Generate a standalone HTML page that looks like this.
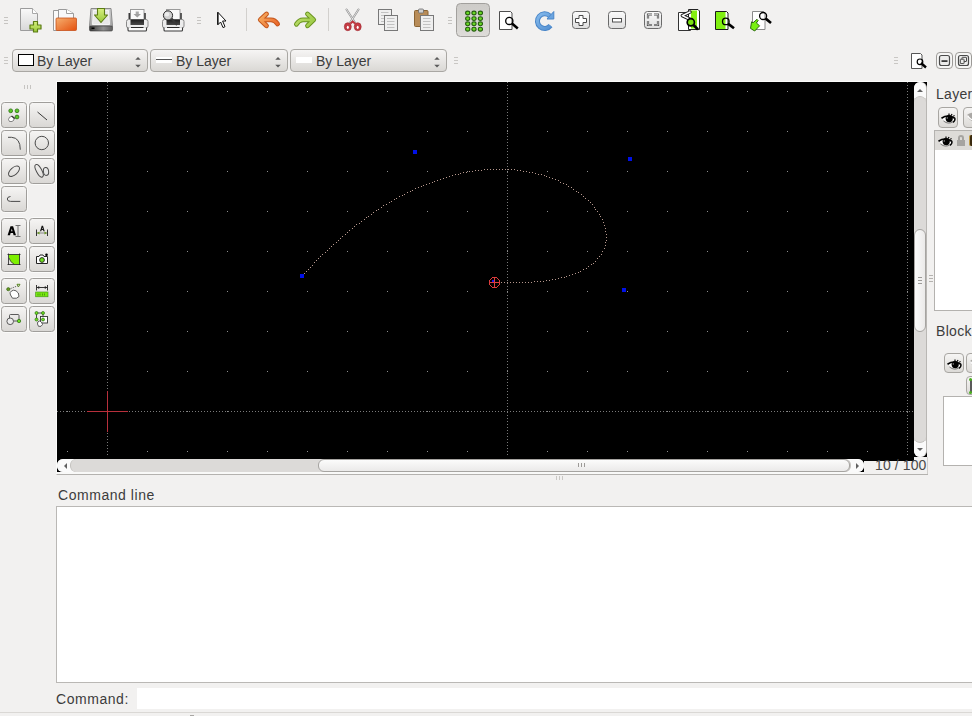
<!DOCTYPE html>
<html><head><meta charset="utf-8">
<style>
*{margin:0;padding:0;box-sizing:border-box}
html,body{width:972px;height:716px;overflow:hidden;background:#f2f1f0;font-family:"Liberation Sans",sans-serif;font-size:14px;color:#3c3c3c}
.a{position:absolute}
.hgrip{position:absolute;width:4px;height:7px;background:repeating-linear-gradient(to bottom,#c9c7c4 0,#c9c7c4 1px,transparent 1px,transparent 3px)}
.vgrip{position:absolute;width:7px;height:4px;background:repeating-linear-gradient(to right,#c9c7c4 0,#c9c7c4 1px,transparent 1px,transparent 3px)}
.combo{position:absolute;top:49px;height:23px;border:1px solid #a9a7a3;border-radius:4px;background:linear-gradient(#f6f5f4,#dad8d5)}
.combo .t{position:absolute;top:3px;font-size:14px;color:#3c3c3c}
.combo .ar{position:absolute;top:6px;width:6px;height:12px}
.tb{position:absolute;width:26px;height:26px;border:1px solid #a8a6a2;border-radius:4px;background:linear-gradient(#f6f5f4,#dcdad7)}
.tb svg{position:absolute;left:0;top:0}
svg{overflow:visible}
</style></head><body>

<!-- toolbar row 1 -->
<svg class="a" style="left:0;top:0" width="972" height="42" viewBox="0 0 972 42"><defs>
<linearGradient id="pg" x1="0" y1="0" x2="0" y2="1"><stop offset="0" stop-color="#fafafa"/><stop offset="1" stop-color="#d8d8d8"/></linearGradient>
<linearGradient id="og" x1="0" y1="0" x2="1" y2="1"><stop offset="0" stop-color="#f6b070"/><stop offset="1" stop-color="#e4500e"/></linearGradient>
<linearGradient id="gg" x1="0" y1="0" x2="0" y2="1"><stop offset="0" stop-color="#d8f080"/><stop offset="1" stop-color="#98c838"/></linearGradient>
<linearGradient id="drv" x1="0" y1="0" x2="0" y2="1"><stop offset="0" stop-color="#d4d4d4"/><stop offset="1" stop-color="#a8a8a8"/></linearGradient>
<linearGradient id="drvb" x1="0" y1="0" x2="1" y2="0"><stop offset="0" stop-color="#3a3a3a"/><stop offset="0.6" stop-color="#909090"/><stop offset="1" stop-color="#606060"/></linearGradient>
<linearGradient id="slot" x1="0" y1="0" x2="0" y2="1"><stop offset="0" stop-color="#202020"/><stop offset="1" stop-color="#4a4a4a"/></linearGradient>
<linearGradient id="ug" gradientUnits="userSpaceOnUse" x1="258" y1="12" x2="280" y2="28"><stop offset="0" stop-color="#f8b868"/><stop offset="1" stop-color="#e85a20"/></linearGradient>
<linearGradient id="rg" gradientUnits="userSpaceOnUse" x1="294" y1="12" x2="316" y2="28"><stop offset="0" stop-color="#c0e070"/><stop offset="1" stop-color="#98c840"/></linearGradient>
<linearGradient id="btn" x1="0" y1="0" x2="0" y2="1"><stop offset="0" stop-color="#fbfbfb"/><stop offset="1" stop-color="#dedede"/></linearGradient>
<linearGradient id="prs" x1="0" y1="0" x2="0" y2="1"><stop offset="0" stop-color="#cdcbc8"/><stop offset="1" stop-color="#dedcd9"/></linearGradient>
<linearGradient id="blu" gradientUnits="userSpaceOnUse" x1="535" y1="11" x2="555" y2="31"><stop offset="0" stop-color="#8cc0f0"/><stop offset="1" stop-color="#4a88cc"/></linearGradient>
</defs><path d="M4 17.5h4M4 20.5h4M4 23.5h4" stroke="#c6c4c1" stroke-width="1"/><path d="M20.5 8.5H32.5L37.5 13.5V30.5H20.5Z" fill="url(#pg)" stroke="#9c9c9c"/><path d="M32.5 8.5V13.5H37.5" fill="#fff" stroke="#a8a8a8"/><path d="M33.5 21.5h4v3.5h3.5v4h-3.5v3h-4v-3H30v-4h3.5Z" fill="url(#gg)" stroke="#5c7c14" stroke-width="1.2" stroke-linejoin="round"/><path d="M53.5 10.5H60V30.5H53.5Z" fill="#fafafa" stroke="#9a9a9a"/><path d="M58.5 9.5H66.5L73.5 13.5V22H58.5Z" fill="#f8f8fa" stroke="#9a9a9a"/><path d="M66.5 9.5V13.5H73.5" fill="#fff" stroke="#a0a0a0"/><rect x="56" y="18" width="20.5" height="12.5" rx="1" fill="url(#og)" stroke="#c8501a" stroke-width="0.8"/><path d="M91 8.5H111L112.5 26.5H89.5Z" fill="url(#drv)" stroke="#8a8a8a"/><path d="M93.5 10.5H108.5L109.5 24.5H92.5Z" fill="#e8e8e8" stroke="#f8f8f8" stroke-width="0.9"/><rect x="89.5" y="26" width="23" height="5" rx="1.2" fill="url(#drvb)" stroke="#3a3a3a" stroke-width="0.6"/><rect x="91.5" y="27.5" width="3" height="1.5" fill="#000"/><path d="M97.5 8.5H104.5V15H107.5L101 22.5L94.5 15H97.5Z" fill="url(#gg)" stroke="#5c7c14" stroke-width="1.1" stroke-linejoin="round"/><rect x="130.5" y="9.5" width="13.5" height="10" fill="#fafafa" stroke="#9a9a9a"/><rect x="128.5" y="13" width="1.6" height="6" fill="#3a3a3a"/><rect x="144.2" y="13" width="1.6" height="6" fill="#3a3a3a"/><rect x="126.5" y="19.5" width="21.5" height="8.5" rx="2" fill="#ececec" stroke="#8a8a8a"/><rect x="130.5" y="19.5" width="13.5" height="5.5" fill="url(#slot)"/><path d="M128 27.5v2.5q0 1 1 1h16.5q1 0 1-1v-2.5" fill="#fbfbfb" stroke="#3a3a3a" stroke-width="1.1"/><path d="M131 27.5H143.5" stroke="#2a2a2a" stroke-width="1"/><path d="M133.5 14h7.5l-3.75 3.6z" fill="#a0a0a0"/><rect x="135.7" y="11.5" width="3.1" height="2.6" fill="#a8a8a8"/><rect x="166.5" y="9.5" width="13.5" height="10" fill="#fafafa" stroke="#9a9a9a"/><rect x="164.5" y="13" width="1.6" height="6" fill="#3a3a3a"/><rect x="180.2" y="13" width="1.6" height="6" fill="#3a3a3a"/><rect x="162.5" y="19.5" width="21.5" height="8.5" rx="2" fill="#ececec" stroke="#8a8a8a"/><rect x="166.5" y="19.5" width="13.5" height="5.5" fill="url(#slot)"/><path d="M164 27.5v2.5q0 1 1 1h16.5q1 0 1-1v-2.5" fill="#fbfbfb" stroke="#3a3a3a" stroke-width="1.1"/><path d="M167 27.5H179.5" stroke="#2a2a2a" stroke-width="1"/><path d="M171.5 18.5l5.5 6.5" stroke="#3a3a3a" stroke-width="2"/><circle cx="168" cy="15.4" r="4.6" fill="#d0d0d0" stroke="#2a2a2a" stroke-width="1"/><circle cx="167" cy="14.2" r="2.2" fill="#ececec"/><path d="M197 17.5h4M197 20.5h4M197 23.5h4" stroke="#c6c4c1" stroke-width="1"/><path d="M217.8 12.2V24.8L220.6 22L223 27.6L225 26.7L222.6 21H226Z" fill="#fff" stroke="#111" stroke-width="1" stroke-linejoin="round"/><path d="M217.8 12.5V24.5" stroke="#111" stroke-width="1.3"/><path d="M246.5 8V31M328.5 8V31" stroke="#d2d0cd" stroke-width="1"/><g fill="none" stroke-linecap="round" stroke-linejoin="round"><path d="M266.5 14L260.3 19.8L266.5 25.8M261.5 19.8H271Q275 19.8 277.6 24" stroke="#c4561c" stroke-width="4.8"/><path d="M266.5 14L260.3 19.8L266.5 25.8M261.5 19.8H271Q275 19.8 277.6 24" stroke="url(#ug)" stroke-width="2.8"/></g><g fill="none" stroke-linecap="round" stroke-linejoin="round"><path d="M307.5 14L313.7 19.8L307.5 25.8M312.5 19.8H303Q299 19.8 296.4 24.3" stroke="#6a9420" stroke-width="4.8"/><path d="M307.5 14L313.7 19.8L307.5 25.8M312.5 19.8H303Q299 19.8 296.4 24.3" stroke="url(#rg)" stroke-width="2.8"/></g><path d="M346.5 9.5L355.5 23.5M358.5 9.5L349.5 23.5" stroke="#8c8c8c" stroke-width="2" stroke-linecap="round"/><path d="M346.5 9.5L355.5 23.5M358.5 9.5L349.5 23.5" stroke="#f4f4f4" stroke-width="0.8" stroke-linecap="round"/><ellipse cx="347.8" cy="26.7" rx="3.5" ry="4" fill="#c43c44" stroke="#a02830" stroke-width="0.6"/><ellipse cx="357.7" cy="26.7" rx="3.5" ry="4" fill="#c43c44" stroke="#a02830" stroke-width="0.6"/><ellipse cx="347.8" cy="27.3" rx="1" ry="1.6" fill="#fff"/><ellipse cx="357.7" cy="27.3" rx="1" ry="1.6" fill="#fff"/><path d="M350.5 23.5L352.7 21.5L355 23.5" stroke="#c03840" stroke-width="2" fill="none"/><rect x="378.5" y="9.5" width="13" height="15" fill="#efefef" stroke="#787878"/><path d="M381 12.5H388.5" stroke="#c2c2c2" stroke-width="1"/><path d="M381 15.5H388.5" stroke="#c2c2c2" stroke-width="1"/><path d="M381 18.5H388.5" stroke="#c2c2c2" stroke-width="1"/><path d="M381 21.5H388.5" stroke="#c2c2c2" stroke-width="1"/><rect x="384.5" y="15.5" width="13" height="15" fill="#efefef" stroke="#787878"/><path d="M387 18.5H394.5" stroke="#c2c2c2" stroke-width="1"/><path d="M387 21.5H394.5" stroke="#c2c2c2" stroke-width="1"/><path d="M387 24.5H394.5" stroke="#c2c2c2" stroke-width="1"/><path d="M387 27.5H394.5" stroke="#c2c2c2" stroke-width="1"/><rect x="414.5" y="10.5" width="13.5" height="16" rx="1" fill="#b88c58" stroke="#8a6434"/><rect x="418.5" y="9" width="5" height="4" rx="1" fill="#d0d0d0" stroke="#6a6a6a" stroke-width="0.8"/><rect x="420.5" y="15.5" width="13" height="15" fill="#efefef" stroke="#787878"/><path d="M423 18.5H430.5" stroke="#c2c2c2" stroke-width="1"/><path d="M423 21.5H430.5" stroke="#c2c2c2" stroke-width="1"/><path d="M423 24.5H430.5" stroke="#c2c2c2" stroke-width="1"/><path d="M423 27.5H430.5" stroke="#c2c2c2" stroke-width="1"/><path d="M448 17.5h4M448 20.5h4M448 23.5h4" stroke="#c6c4c1" stroke-width="1"/><rect x="456.5" y="3.5" width="33" height="33" rx="4" fill="url(#prs)" stroke="#a2a09d"/><ellipse cx="467.7" cy="13" rx="2.1" ry="1.9" fill="#6ad824" stroke="#245e0e" stroke-width="1.1"/><ellipse cx="467.7" cy="18.6" rx="2.1" ry="1.9" fill="#6ad824" stroke="#245e0e" stroke-width="1.1"/><ellipse cx="467.7" cy="23.8" rx="2.1" ry="1.9" fill="#6ad824" stroke="#245e0e" stroke-width="1.1"/><ellipse cx="467.7" cy="29.2" rx="2.1" ry="1.9" fill="#6ad824" stroke="#245e0e" stroke-width="1.1"/><ellipse cx="474" cy="13" rx="2.1" ry="1.9" fill="#6ad824" stroke="#245e0e" stroke-width="1.1"/><ellipse cx="474" cy="18.6" rx="2.1" ry="1.9" fill="#6ad824" stroke="#245e0e" stroke-width="1.1"/><ellipse cx="474" cy="23.8" rx="2.1" ry="1.9" fill="#6ad824" stroke="#245e0e" stroke-width="1.1"/><ellipse cx="474" cy="29.2" rx="2.1" ry="1.9" fill="#6ad824" stroke="#245e0e" stroke-width="1.1"/><ellipse cx="480.4" cy="13" rx="2.1" ry="1.9" fill="#6ad824" stroke="#245e0e" stroke-width="1.1"/><ellipse cx="480.4" cy="18.6" rx="2.1" ry="1.9" fill="#6ad824" stroke="#245e0e" stroke-width="1.1"/><ellipse cx="480.4" cy="23.8" rx="2.1" ry="1.9" fill="#6ad824" stroke="#245e0e" stroke-width="1.1"/><ellipse cx="480.4" cy="29.2" rx="2.1" ry="1.9" fill="#6ad824" stroke="#245e0e" stroke-width="1.1"/><path d="M499.5 11.5H510.5L512 13V29.5H499.5Z" fill="#fff" stroke="#3a3a3a" stroke-width="0.9"/><path d="M512.0 23.599999999999998L517.8 28.4" stroke="#000" stroke-width="2.6"/><circle cx="509.3" cy="20.9" r="3.6" fill="none" stroke="#000" stroke-width="1.3"/><path d="M549.7 15.8A7.3 7.3 0 1 0 550.5 25.6" fill="none" stroke="#4a86c8" stroke-width="5"/><path d="M549.7 15.8A7.3 7.3 0 1 0 550.5 25.6" fill="none" stroke="url(#blu)" stroke-width="3"/><path d="M553.8 11.5V19H547Z" fill="#6aa4e0" stroke="#4a86c8" stroke-width="1" stroke-linejoin="round"/><rect x="572.5" y="11.5" width="17" height="17" rx="3" fill="url(#btn)" stroke="#6a6a6a"/><path d="M579 15.5h4v3h3.5v4h-3.5v3h-4v-3h-3.5v-4h3.5z" fill="#fff" stroke="#4a4a4a" stroke-width="1"/><rect x="608.5" y="11.5" width="17" height="17" rx="3" fill="url(#btn)" stroke="#6a6a6a"/><rect x="612.5" y="18.5" width="9" height="3.5" fill="#fff" stroke="#505050"/><rect x="644.5" y="11.5" width="17" height="17" rx="3" fill="url(#btn)" stroke="#6a6a6a"/><path d="M648 18.5V14.5H652M654 14.5H658V18.5M658 21V25H654M652 25H648V21" fill="none" stroke="#505050" stroke-width="2.2"/><path d="M648 18.5V14.5H652M654 14.5H658V18.5M658 21V25H654M652 25H648V21" fill="none" stroke="#fff" stroke-width="0.6"/><path d="M678.5 12.5H684L690.5 12.5V30.5H678.5Z" fill="#fff" stroke="#333" stroke-width="1"/><path d="M688.5 9.5H698L699.5 11V29.5H688.5Z" fill="#fff" stroke="#222" stroke-width="1"/><rect x="691" y="10.5" width="6" height="18" fill="#84ee10"/><path d="M690 12L682.3 15.6L690 19.3" fill="none" stroke="#1a1a1a" stroke-width="3.4" stroke-linejoin="round" stroke-linecap="round"/><path d="M690 12L682.3 15.6L690 19.3" fill="none" stroke="#fff" stroke-width="1.6" stroke-linejoin="round" stroke-linecap="round"/><path d="M693.5 25.0L698 29.5" stroke="#000" stroke-width="2.6"/><circle cx="690.8" cy="22.3" r="3.6" fill="#78e010" stroke="#000" stroke-width="1.7"/><path d="M715.5 11.5H726.5L728 13V29.5H715.5Z" fill="#fff" stroke="#1a1a1a" stroke-width="1"/><rect x="716" y="12" width="9.5" height="17" fill="#80f010"/><path d="M728.275 23.875L734 28.2" stroke="#000" stroke-width="2.6"/><circle cx="725.8" cy="21.4" r="3.3" fill="none" stroke="#000" stroke-width="1.3"/><path d="M752.5 11.5H763.5L765 13V29.5H752.5Z" fill="#fff" stroke="#8a8a8a" stroke-width="1"/><path d="M765.725 18.625L771 23" stroke="#000" stroke-width="2.6"/><circle cx="763.1" cy="16" r="3.5" fill="none" stroke="#000" stroke-width="1.3"/><path d="M750.5 28.4L751.6 21.8L753 22.8L757 19.3L758.2 20.5L756.4 23L759.6 25.8L754.7 31Z" fill="#78f010" stroke="#1e5a08" stroke-width="0.9" stroke-linejoin="round"/></svg>

<!-- toolbar row 2 -->
<div class="hgrip" style="left:4px;top:57px"></div>
<div class="combo" style="left:12px;width:136px"><svg class="ar" style="left:122px;top:6px" width="7" height="13" viewBox="0 0 7 13"><path d="M0.3 3.9L3.5 0.7L6.7 3.9Z" fill="#5a5a5a"/><path d="M0.3 9.8L3.5 13L6.7 9.8Z" fill="#5a5a5a"/></svg>
  <div class="a" style="left:5px;top:4px;width:16px;height:12px;border:1.2px solid #000;background:#fff"></div>
  <div class="t" style="left:24px">By Layer</div>
</div>
<div class="combo" style="left:150px;width:138px"><svg class="ar" style="left:124px;top:6px" width="7" height="13" viewBox="0 0 7 13"><path d="M0.3 3.9L3.5 0.7L6.7 3.9Z" fill="#5a5a5a"/><path d="M0.3 9.8L3.5 13L6.7 9.8Z" fill="#5a5a5a"/></svg>
  <div class="a" style="left:5px;top:7px;width:16px;height:6px;background:#fff"><div class="a" style="left:0;top:2px;width:16px;height:1px;background:#555"></div></div>
  <div class="t" style="left:25px">By Layer</div>
</div>
<div class="combo" style="left:290px;width:157px"><svg class="ar" style="left:143px;top:6px" width="7" height="13" viewBox="0 0 7 13"><path d="M0.3 3.9L3.5 0.7L6.7 3.9Z" fill="#5a5a5a"/><path d="M0.3 9.8L3.5 13L6.7 9.8Z" fill="#5a5a5a"/></svg>
  <div class="a" style="left:5px;top:7px;width:16px;height:6px;background:#fff"></div>
  <div class="t" style="left:25px">By Layer</div>
</div>
<div class="hgrip" style="left:454px;top:57px"></div>
<div class="hgrip" style="left:894px;top:57px"></div>

<svg class="a" style="left:900px;top:42px" width="72" height="38" viewBox="900 42 72 38">
<path d="M911.5 53.5H920.5L922 55V68.5H911.5Z" fill="#fff" stroke="#555" stroke-width="1"/>
<path d="M921 63L926 67.5" stroke="#000" stroke-width="2.4"/><circle cx="920" cy="61.8" r="2.8" fill="none" stroke="#000" stroke-width="1.2"/>
<rect x="936.5" y="52.5" width="16" height="16" rx="3.5" fill="#f6f6f5" stroke="#9c9a97"/>
<rect x="939.5" y="55.5" width="10" height="10" rx="2" fill="#ececeb" stroke="#4a4a4a" stroke-width="1.2"/>
<rect x="941.5" y="60.2" width="6" height="1.8" fill="#3a3a3a"/>
<rect x="955.5" y="52.5" width="16" height="16" rx="3.5" fill="#f6f6f5" stroke="#9c9a97"/>
<rect x="958.5" y="55.5" width="10" height="10" rx="2" fill="#ececeb" stroke="#4a4a4a" stroke-width="1.2"/>
<rect x="962" y="57.3" width="4.5" height="4.2" rx="0.5" fill="none" stroke="#4a4a4a" stroke-width="1"/>
<rect x="960.3" y="59.2" width="3.8" height="4.4" rx="0.5" fill="#ececeb" stroke="#4a4a4a" stroke-width="1"/>
</svg>

<!-- left tool panel -->
<svg class="a" style="left:0;top:0" width="60" height="340" viewBox="0 0 60 340"><defs><linearGradient id="tbg" x1="0" y1="0" x2="0" y2="1"><stop offset="0" stop-color="#f6f5f4"/><stop offset="1" stop-color="#d9d7d4"/></linearGradient></defs><path d="M24.5 85V89M27.5 85V89M30.5 85V89" stroke="#c6c4c1"/><rect x="0.5" y="101.5" width="27" height="27" rx="4" fill="none" stroke="#fbfbfa"/><rect x="1.5" y="102.5" width="25" height="25" rx="3" fill="url(#tbg)" stroke="#a09e9b"/><rect x="28.5" y="101.5" width="27" height="27" rx="4" fill="none" stroke="#fbfbfa"/><rect x="29.5" y="102.5" width="25" height="25" rx="3" fill="url(#tbg)" stroke="#a09e9b"/><rect x="0.5" y="129.5" width="27" height="27" rx="4" fill="none" stroke="#fbfbfa"/><rect x="1.5" y="130.5" width="25" height="25" rx="3" fill="url(#tbg)" stroke="#a09e9b"/><rect x="28.5" y="129.5" width="27" height="27" rx="4" fill="none" stroke="#fbfbfa"/><rect x="29.5" y="130.5" width="25" height="25" rx="3" fill="url(#tbg)" stroke="#a09e9b"/><rect x="0.5" y="157.5" width="27" height="27" rx="4" fill="none" stroke="#fbfbfa"/><rect x="1.5" y="158.5" width="25" height="25" rx="3" fill="url(#tbg)" stroke="#a09e9b"/><rect x="28.5" y="157.5" width="27" height="27" rx="4" fill="none" stroke="#fbfbfa"/><rect x="29.5" y="158.5" width="25" height="25" rx="3" fill="url(#tbg)" stroke="#a09e9b"/><rect x="0.5" y="185.5" width="27" height="27" rx="4" fill="none" stroke="#fbfbfa"/><rect x="1.5" y="186.5" width="25" height="25" rx="3" fill="url(#tbg)" stroke="#a09e9b"/><rect x="0.5" y="217.5" width="27" height="27" rx="4" fill="none" stroke="#fbfbfa"/><rect x="1.5" y="218.5" width="25" height="25" rx="3" fill="url(#tbg)" stroke="#a09e9b"/><rect x="28.5" y="217.5" width="27" height="27" rx="4" fill="none" stroke="#fbfbfa"/><rect x="29.5" y="218.5" width="25" height="25" rx="3" fill="url(#tbg)" stroke="#a09e9b"/><rect x="0.5" y="245.5" width="27" height="27" rx="4" fill="none" stroke="#fbfbfa"/><rect x="1.5" y="246.5" width="25" height="25" rx="3" fill="url(#tbg)" stroke="#a09e9b"/><rect x="28.5" y="245.5" width="27" height="27" rx="4" fill="none" stroke="#fbfbfa"/><rect x="29.5" y="246.5" width="25" height="25" rx="3" fill="url(#tbg)" stroke="#a09e9b"/><rect x="0.5" y="277.5" width="27" height="27" rx="4" fill="none" stroke="#fbfbfa"/><rect x="1.5" y="278.5" width="25" height="25" rx="3" fill="url(#tbg)" stroke="#a09e9b"/><rect x="28.5" y="277.5" width="27" height="27" rx="4" fill="none" stroke="#fbfbfa"/><rect x="29.5" y="278.5" width="25" height="25" rx="3" fill="url(#tbg)" stroke="#a09e9b"/><rect x="0.5" y="305.5" width="27" height="27" rx="4" fill="none" stroke="#fbfbfa"/><rect x="1.5" y="306.5" width="25" height="25" rx="3" fill="url(#tbg)" stroke="#a09e9b"/><rect x="28.5" y="305.5" width="27" height="27" rx="4" fill="none" stroke="#fbfbfa"/><rect x="29.5" y="306.5" width="25" height="25" rx="3" fill="url(#tbg)" stroke="#a09e9b"/><g fill="#5cc828" stroke="#2a7010" stroke-width="0.8"><circle cx="10.7" cy="110.8" r="1.9"/><circle cx="17" cy="110.8" r="1.9"/><circle cx="17" cy="117" r="1.9"/></g><path d="M8.5 119.5Q9 116.5 11.5 116.5L13.5 117.5L14 120L12 121.5H9.5Z" fill="#fff" stroke="#555" stroke-width="0.7"/><path d="M11.5 116L15 118.5" stroke="#333" stroke-width="1.2"/><path d="M37.5 112L47 120" stroke="#3a3a3a" stroke-width="1"/><path d="M8 137.3H11.5Q20.3 137.8 20.3 149.7" fill="none" stroke="#4a4a4a" stroke-width="1"/><circle cx="41.8" cy="143" r="6.7" fill="none" stroke="#4a4a4a" stroke-width="1"/><ellipse cx="14" cy="171.2" rx="6.7" ry="3.6" transform="rotate(-42 14 171.2)" fill="none" stroke="#4a4a4a" stroke-width="1"/><ellipse cx="39.1" cy="170.8" rx="7" ry="2.7" transform="rotate(62 39.1 170.8)" fill="none" stroke="#4a4a4a" stroke-width="1"/><ellipse cx="46" cy="171.4" rx="2.6" ry="4" transform="rotate(-8 46 171.4)" fill="#e6e6e6" stroke="#4a4a4a" stroke-width="1"/><path d="M10.5 196.5Q7.2 196.8 7.3 199Q7.4 201.4 10.5 201.4H20.3" fill="none" stroke="#4a4a4a" stroke-width="1"/><path d="M7.6 235.2L10.5 226.2H13.1L16 235.2H13.6L13 233.1H10.6L10 235.2ZM11.1 231.2H12.5L11.8 228.6Z" fill="#000" fill-rule="evenodd"/><path d="M15.5 225.5H20.5M18 225.5V236.5M15.5 236.5H20.5" stroke="#707070" stroke-width="1"/><path d="M40 231.2L41.7 225.8H43L44.7 231.2H43.4L43.1 230.1H41.6L41.3 231.2ZM41.9 229.1H42.8L42.35 227.5Z" fill="#111" fill-rule="evenodd"/><path d="M36.5 229.5V236M47.5 229.5V236" stroke="#333" stroke-width="1"/><path d="M37 233H47" stroke="#888" stroke-width="1"/><path d="M37 233l2.5-1.5v3zM47 233l-2.5-1.5v3z" fill="#6a9a20"/><path d="M9 254.5H19.5V264.5H14.5Q10 262 9 258Z" fill="#7ef000"/><path d="M8.5 253.5V265M19.5 253.5V265M7.5 254.5H20.5M7.5 264.5H20.5" stroke="#222" stroke-width="0.8"/><path d="M9 258Q10 262 14.5 264.5" fill="none" stroke="#3a3a3a" stroke-width="0.8"/><path d="M36.5 256.5H39L40 255H43L44 256.5H47.5V263.5H36.5Z" fill="#fff" stroke="#222" stroke-width="1"/><circle cx="42" cy="260" r="2.4" fill="#70e020" stroke="#222" stroke-width="0.9"/><circle cx="46.5" cy="254.8" r="1.3" fill="#000"/><path d="M9.5 289L18.5 285.5" stroke="#333" stroke-width="0.8" stroke-dasharray="1 1"/><circle cx="8.3" cy="289.2" r="1.6" fill="#6a9a20" stroke="#2a5a10" stroke-width="0.6"/><path d="M17 284.3H20L18.5 286.8Z" fill="#fff" stroke="#4a7a10" stroke-width="0.9"/><path d="M10.5 295Q9 292.5 11.5 291L13.5 290.2L16 290.8L18.3 293L19 296.5L16.5 298.2H12.5Z" fill="#fff" stroke="#3a3a3a" stroke-width="0.8"/><path d="M36.5 285V290.5M47.5 285V290.5M37 287.5H47" stroke="#222" stroke-width="0.9"/><path d="M37 287.5l2.2-1.4v2.8zM47 287.5l-2.2-1.4v2.8z" fill="#222"/><rect x="35.7" y="292" width="12.3" height="4.8" fill="#78ea10" stroke="#3a8a10" stroke-width="0.6"/><path d="M38 293.5v2M40 293.5v2M42.5 293.5v2M44.5 293.5v2" stroke="#3a7a10" stroke-width="0.7"/><rect x="9.5" y="314.5" width="9.5" height="6.5" rx="1" fill="none" stroke="#4a4a4a" stroke-width="0.9"/><circle cx="10.2" cy="321.3" r="3.3" fill="#ececec" stroke="#4a4a4a" stroke-width="0.9"/><circle cx="19" cy="321" r="1.7" fill="#6ae020" stroke="#2a6a10" stroke-width="0.7"/><path d="M36.5 313V319.5M36.5 313H43M43 313V319.5" stroke="#222" stroke-width="0.8"/><rect x="40.5" y="316.5" width="7" height="6.5" fill="#fff" stroke="#333" stroke-width="0.9"/><g fill="#70e020" stroke="#2a7010" stroke-width="0.7"><circle cx="36.5" cy="313" r="1.5"/><circle cx="43" cy="313" r="1.5"/><circle cx="36.5" cy="319.5" r="1.5"/><circle cx="43" cy="319.5" r="1.5"/></g><path d="M37.5 324Q37 321.5 39.5 321L41.5 322L42.5 324.5L41 326.3H38.5Z" fill="#fff" stroke="#3a3a3a" stroke-width="0.8"/></svg>

<!-- canvas -->
<div class="a" style="left:56px;top:81px;width:872px;height:394px;border-left:1px solid #fbfbfa;border-top:1px solid #fbfbfa;border-bottom:1px solid #b4b2af"></div>
<div class="a" style="left:57px;top:82px;width:870px;height:390px;background:#000"></div>
<div class="a" style="left:57px;top:472px;width:870px;height:2px;background:#f9f9f8"></div>
<svg class="a" style="left:57px;top:82px" width="870" height="375" viewBox="0 0 870 375" shape-rendering="crispEdges">
<path d="M10 9h1v1h-1zM10 49h1v1h-1zM10 89h1v1h-1zM10 129h1v1h-1zM10 169h1v1h-1zM10 209h1v1h-1zM10 249h1v1h-1zM10 289h1v1h-1zM10 329h1v1h-1zM10 369h1v1h-1zM50 9h1v1h-1zM50 49h1v1h-1zM50 89h1v1h-1zM50 129h1v1h-1zM50 169h1v1h-1zM50 209h1v1h-1zM50 249h1v1h-1zM50 289h1v1h-1zM50 329h1v1h-1zM50 369h1v1h-1zM90 9h1v1h-1zM90 49h1v1h-1zM90 89h1v1h-1zM90 129h1v1h-1zM90 169h1v1h-1zM90 209h1v1h-1zM90 249h1v1h-1zM90 289h1v1h-1zM90 329h1v1h-1zM90 369h1v1h-1zM130 9h1v1h-1zM130 49h1v1h-1zM130 89h1v1h-1zM130 129h1v1h-1zM130 169h1v1h-1zM130 209h1v1h-1zM130 249h1v1h-1zM130 289h1v1h-1zM130 329h1v1h-1zM130 369h1v1h-1zM170 9h1v1h-1zM170 49h1v1h-1zM170 89h1v1h-1zM170 129h1v1h-1zM170 169h1v1h-1zM170 209h1v1h-1zM170 249h1v1h-1zM170 289h1v1h-1zM170 329h1v1h-1zM170 369h1v1h-1zM210 9h1v1h-1zM210 49h1v1h-1zM210 89h1v1h-1zM210 129h1v1h-1zM210 169h1v1h-1zM210 209h1v1h-1zM210 249h1v1h-1zM210 289h1v1h-1zM210 329h1v1h-1zM210 369h1v1h-1zM250 9h1v1h-1zM250 49h1v1h-1zM250 89h1v1h-1zM250 129h1v1h-1zM250 169h1v1h-1zM250 209h1v1h-1zM250 249h1v1h-1zM250 289h1v1h-1zM250 329h1v1h-1zM250 369h1v1h-1zM290 9h1v1h-1zM290 49h1v1h-1zM290 89h1v1h-1zM290 129h1v1h-1zM290 169h1v1h-1zM290 209h1v1h-1zM290 249h1v1h-1zM290 289h1v1h-1zM290 329h1v1h-1zM290 369h1v1h-1zM330 9h1v1h-1zM330 49h1v1h-1zM330 89h1v1h-1zM330 129h1v1h-1zM330 169h1v1h-1zM330 209h1v1h-1zM330 249h1v1h-1zM330 289h1v1h-1zM330 329h1v1h-1zM330 369h1v1h-1zM370 9h1v1h-1zM370 49h1v1h-1zM370 89h1v1h-1zM370 129h1v1h-1zM370 169h1v1h-1zM370 209h1v1h-1zM370 249h1v1h-1zM370 289h1v1h-1zM370 329h1v1h-1zM370 369h1v1h-1zM410 9h1v1h-1zM410 49h1v1h-1zM410 89h1v1h-1zM410 129h1v1h-1zM410 169h1v1h-1zM410 209h1v1h-1zM410 249h1v1h-1zM410 289h1v1h-1zM410 329h1v1h-1zM410 369h1v1h-1zM450 9h1v1h-1zM450 49h1v1h-1zM450 89h1v1h-1zM450 129h1v1h-1zM450 169h1v1h-1zM450 209h1v1h-1zM450 249h1v1h-1zM450 289h1v1h-1zM450 329h1v1h-1zM450 369h1v1h-1zM490 9h1v1h-1zM490 49h1v1h-1zM490 89h1v1h-1zM490 129h1v1h-1zM490 169h1v1h-1zM490 209h1v1h-1zM490 249h1v1h-1zM490 289h1v1h-1zM490 329h1v1h-1zM490 369h1v1h-1zM530 9h1v1h-1zM530 49h1v1h-1zM530 89h1v1h-1zM530 129h1v1h-1zM530 169h1v1h-1zM530 209h1v1h-1zM530 249h1v1h-1zM530 289h1v1h-1zM530 329h1v1h-1zM530 369h1v1h-1zM570 9h1v1h-1zM570 49h1v1h-1zM570 89h1v1h-1zM570 129h1v1h-1zM570 169h1v1h-1zM570 209h1v1h-1zM570 249h1v1h-1zM570 289h1v1h-1zM570 329h1v1h-1zM570 369h1v1h-1zM610 9h1v1h-1zM610 49h1v1h-1zM610 89h1v1h-1zM610 129h1v1h-1zM610 169h1v1h-1zM610 209h1v1h-1zM610 249h1v1h-1zM610 289h1v1h-1zM610 329h1v1h-1zM610 369h1v1h-1zM650 9h1v1h-1zM650 49h1v1h-1zM650 89h1v1h-1zM650 129h1v1h-1zM650 169h1v1h-1zM650 209h1v1h-1zM650 249h1v1h-1zM650 289h1v1h-1zM650 329h1v1h-1zM650 369h1v1h-1zM690 9h1v1h-1zM690 49h1v1h-1zM690 89h1v1h-1zM690 129h1v1h-1zM690 169h1v1h-1zM690 209h1v1h-1zM690 249h1v1h-1zM690 289h1v1h-1zM690 329h1v1h-1zM690 369h1v1h-1zM730 9h1v1h-1zM730 49h1v1h-1zM730 89h1v1h-1zM730 129h1v1h-1zM730 169h1v1h-1zM730 209h1v1h-1zM730 249h1v1h-1zM730 289h1v1h-1zM730 329h1v1h-1zM730 369h1v1h-1zM770 9h1v1h-1zM770 49h1v1h-1zM770 89h1v1h-1zM770 129h1v1h-1zM770 169h1v1h-1zM770 209h1v1h-1zM770 249h1v1h-1zM770 289h1v1h-1zM770 329h1v1h-1zM770 369h1v1h-1zM810 9h1v1h-1zM810 49h1v1h-1zM810 89h1v1h-1zM810 129h1v1h-1zM810 169h1v1h-1zM810 209h1v1h-1zM810 249h1v1h-1zM810 289h1v1h-1zM810 329h1v1h-1zM810 369h1v1h-1zM850 9h1v1h-1zM850 49h1v1h-1zM850 89h1v1h-1zM850 129h1v1h-1zM850 169h1v1h-1zM850 209h1v1h-1zM850 249h1v1h-1zM850 289h1v1h-1zM850 329h1v1h-1zM850 369h1v1h-1z" fill="#8e8e8e"/>
<path d="M50.5 0V375M450.5 0V375M850.5 0V375M0 329.5H870" stroke="#7a7a7a" stroke-width="1" stroke-dasharray="1 2" fill="none"/>
<path d="M245 194h1v1h-1zM247 191h1v1h-1zM249 189h1v1h-1zM251 187h1v1h-1zM253 185h1v1h-1zM255 183h1v1h-1zM257 180h1v1h-1zM259 178h1v1h-1zM261 176h1v1h-1zM263 174h1v1h-1zM265 172h1v1h-1zM268 170h1v1h-1zM270 168h1v1h-1zM272 166h1v1h-1zM274 164h1v1h-1zM276 162h1v1h-1zM279 160h1v1h-1zM281 158h1v1h-1zM283 156h1v1h-1zM285 154h1v1h-1zM288 152h1v1h-1zM290 150h1v1h-1zM292 148h1v1h-1zM295 146h1v1h-1zM297 144h1v1h-1zM299 142h1v1h-1zM302 141h1v1h-1zM304 139h1v1h-1zM307 137h1v1h-1zM309 135h1v1h-1zM311 134h1v1h-1zM314 132h1v1h-1zM316 130h1v1h-1zM319 128h1v1h-1zM321 127h1v1h-1zM324 125h1v1h-1zM326 123h1v1h-1zM329 122h1v1h-1zM332 120h1v1h-1zM334 119h1v1h-1zM337 117h1v1h-1zM339 116h1v1h-1zM342 114h1v1h-1zM345 113h1v1h-1zM347 112h1v1h-1zM350 110h1v1h-1zM353 109h1v1h-1zM355 108h1v1h-1zM358 106h1v1h-1zM361 105h1v1h-1zM364 104h1v1h-1zM366 103h1v1h-1zM369 102h1v1h-1zM372 101h1v1h-1zM375 100h1v1h-1zM377 99h1v1h-1zM380 98h1v1h-1zM383 97h1v1h-1zM386 96h1v1h-1zM389 95h1v1h-1zM392 94h1v1h-1zM395 93h1v1h-1zM398 92h1v1h-1zM401 92h1v1h-1zM403 91h1v1h-1zM406 90h1v1h-1zM409 90h1v1h-1zM412 89h1v1h-1zM415 89h1v1h-1zM418 88h1v1h-1zM421 88h1v1h-1zM424 88h1v1h-1zM427 87h1v1h-1zM430 87h1v1h-1zM433 87h1v1h-1zM436 87h1v1h-1zM439 87h1v1h-1zM442 87h1v1h-1zM445 87h1v1h-1zM448 87h1v1h-1zM451 87h1v1h-1zM454 87h1v1h-1zM457 87h1v1h-1zM460 88h1v1h-1zM463 88h1v1h-1zM466 89h1v1h-1zM469 89h1v1h-1zM472 90h1v1h-1zM475 90h1v1h-1zM478 91h1v1h-1zM481 92h1v1h-1zM484 92h1v1h-1zM487 93h1v1h-1zM489 94h1v1h-1zM492 95h1v1h-1zM495 96h1v1h-1zM498 97h1v1h-1zM501 98h1v1h-1zM503 100h1v1h-1zM506 101h1v1h-1zM509 102h1v1h-1zM511 104h1v1h-1zM514 105h1v1h-1zM516 107h1v1h-1zM519 109h1v1h-1zM521 110h1v1h-1zM524 112h1v1h-1zM526 114h1v1h-1zM528 116h1v1h-1zM531 118h1v1h-1zM533 120h1v1h-1zM535 122h1v1h-1zM537 125h1v1h-1zM538 127h1v1h-1zM540 129h1v1h-1zM542 132h1v1h-1zM543 134h1v1h-1zM545 137h1v1h-1zM546 140h1v1h-1zM547 143h1v1h-1zM548 146h1v1h-1zM548 149h1v1h-1zM549 152h1v1h-1zM549 155h1v1h-1zM549 158h1v1h-1zM548 160h1v1h-1zM548 163h1v1h-1zM547 166h1v1h-1zM545 169h1v1h-1zM544 172h1v1h-1zM542 174h1v1h-1zM540 176h1v1h-1zM538 179h1v1h-1zM536 181h1v1h-1zM534 182h1v1h-1zM531 184h1v1h-1zM529 186h1v1h-1zM526 187h1v1h-1zM523 189h1v1h-1zM521 190h1v1h-1zM518 191h1v1h-1zM515 192h1v1h-1zM512 193h1v1h-1zM509 194h1v1h-1zM507 195h1v1h-1zM504 195h1v1h-1zM501 196h1v1h-1zM498 197h1v1h-1zM495 197h1v1h-1zM492 198h1v1h-1zM489 198h1v1h-1zM486 199h1v1h-1zM483 199h1v1h-1zM480 199h1v1h-1zM477 199h1v1h-1zM474 200h1v1h-1zM471 200h1v1h-1zM468 200h1v1h-1zM465 200h1v1h-1zM462 200h1v1h-1zM459 200h1v1h-1zM456 200h1v1h-1zM453 200h1v1h-1zM450 200h1v1h-1zM447 200h1v1h-1zM444 200h1v1h-1zM441 200h1v1h-1zM438 200h1v1h-1z" fill="#b4968c"/>
<path d="M30 329h41v1h-41zM50 309h1v41h-1z" fill="#b8303c"/>
<rect x="50" y="329" width="1" height="1" fill="#d82828"/>
<g fill="#0010e8"><rect x="243" y="192" width="4" height="4"/><rect x="356" y="68" width="4" height="4"/><rect x="571" y="75" width="4" height="4"/><rect x="565" y="206" width="4" height="4"/></g>
<path d="M435 195h5v1h-5zM434 196h1v1h-1zM433 197h1v1h-1zM432 198h1v5h-1zM433 203h1v1h-1zM434 204h1v1h-1zM435 205h5v1h-5zM440 196h1v1h-1zM441 197h1v1h-1zM442 198h1v5h-1zM441 203h1v1h-1zM440 204h1v1h-1zM433 200h9v1h-9zM437 196h1v4h-1zM437 201h1v4h-1z" fill="#dc3c3c"/>
<rect x="435" y="198" width="2" height="2" fill="#1a10e0"/>
</svg>

<!-- vertical scrollbar -->
<div class="a" style="left:914px;top:82px;width:13px;height:375px;background:#dcdad8;border-right:1px solid #b9b7b4;border-radius:6px"></div>
<div class="a" style="left:914px;top:82px;width:12px;height:16px;background:#fafafa;border-radius:6px 6px 0 0"></div>
<div class="a" style="left:914px;top:96px;width:12px;height:8px;background:#dcdad8;border-radius:6px 6px 0 0;border-top:1px solid #c4c2bf"></div>
<div class="a" style="left:917px;top:89px;width:0;height:0;border-left:3px solid transparent;border-right:3px solid transparent;border-bottom:3px solid #606060"></div>
<div class="a" style="left:914px;top:441px;width:12px;height:16px;background:#fafafa;border-radius:0 0 6px 6px"></div>
<div class="a" style="left:914px;top:434px;width:12px;height:9px;background:#dcdad8;border-radius:0 0 6px 6px;border-bottom:1px solid #c4c2bf"></div>
<div class="a" style="left:917px;top:448px;width:0;height:0;border-left:3px solid transparent;border-right:3px solid transparent;border-top:3px solid #606060"></div>
<div class="a" style="left:914px;top:229px;width:12px;height:103px;background:linear-gradient(to right,#fbfbfb,#ebeae9);border:1px solid #a6a4a1;border-radius:6px"></div>
<div class="a" style="left:918px;top:277px;width:4px;height:7px;background:repeating-linear-gradient(to bottom,#9c9a97 0,#9c9a97 1px,transparent 1px,transparent 3px)"></div>

<!-- horizontal scrollbar -->
<div class="a" style="left:57px;top:459px;width:807px;height:13px;background:#dcdad8;border-radius:6px"></div>
<div class="a" style="left:57px;top:459px;width:17px;height:13px;background:#fafafa;border-radius:6px 0 0 6px"></div>
<div class="a" style="left:70px;top:459px;width:9px;height:13px;background:#dcdad8;border-radius:6px 0 0 6px;border-left:1px solid #c4c2bf"></div>
<div class="a" style="left:64px;top:463px;width:0;height:0;border-top:3px solid transparent;border-bottom:3px solid transparent;border-right:3px solid #606060"></div>
<div class="a" style="left:847px;top:459px;width:17px;height:13px;background:#fafafa;border-radius:0 6px 6px 0"></div>
<div class="a" style="left:842px;top:459px;width:9px;height:13px;background:#dcdad8;border-radius:0 6px 6px 0;border-right:1px solid #c4c2bf"></div>
<div class="a" style="left:856px;top:463px;width:0;height:0;border-top:3px solid transparent;border-bottom:3px solid transparent;border-left:3px solid #606060"></div>
<div class="a" style="left:318px;top:459px;width:532px;height:13px;background:linear-gradient(#fbfbfb,#ebeae9);border:1px solid #a6a4a1;border-radius:6px"></div>
<div class="a" style="left:578px;top:463px;width:7px;height:4px;background:repeating-linear-gradient(to right,#9c9a97 0,#9c9a97 1px,transparent 1px,transparent 3px)"></div>
<div class="a" style="left:864px;top:461px;width:64px;height:13px;background:#f2f1f0;border-right:1px solid #d0cecb"></div>
<div class="a" style="left:914px;top:457px;width:14px;height:4px;background:#f2f1f0;border-right:1px solid #d0cecb"></div>
<div class="a" style="left:875px;top:457px;font-size:14px;color:#4a4a4a;letter-spacing:0.1px">10 / 100</div>
<div class="vgrip" style="left:556px;top:476px;width:7px;height:4px"></div>


<!-- right dock -->
<div class="vgrip" style="left:929px;top:275px;width:4px;height:7px;background:repeating-linear-gradient(to bottom,#b4b2af 0,#b4b2af 1px,transparent 1px,transparent 3px)"></div>
<div class="a" style="left:936px;top:86px;font-size:14px;color:#3c3c3c;letter-spacing:0.3px">Layer</div>
<div class="a" style="left:938px;top:107px;width:20px;height:21px;border:1px solid #a8a6a2;border-radius:4px;background:linear-gradient(#f6f5f4,#dcdad7)"><div class="a" style="left:2px;top:4px"><svg width="15" height="12" viewBox="0 0 15 12"><path d="M0.8 5Q7 12.5 14 6.5Q8 0.5 0.8 5Z" fill="#fff"/><path d="M2.5 8Q7.5 12 12.5 8.5" fill="none" stroke="#707070" stroke-width="0.9"/><path d="M0.5 5.2Q7 0.8 13.8 5.2" fill="none" stroke="#000" stroke-width="1.7"/><path d="M13.8 5Q14.6 7.5 12 9.3" fill="none" stroke="#000" stroke-width="1.4"/><circle cx="8.2" cy="5.6" r="3.6" fill="#000"/><rect x="5.6" y="4.3" width="1.4" height="1.3" fill="#8a8a8a"/><path d="M8 2V0.5M10.3 2.4L11 1M12.3 3.4L13.5 2.4" stroke="#000" stroke-width="1.2"/></svg></div></div>
<div class="a" style="left:963px;top:107px;width:20px;height:21px;border:1px solid #a8a6a2;border-radius:4px;background:linear-gradient(#f6f5f4,#dcdad7)"><svg class="a" style="left:2px;top:4px" width="16" height="12" viewBox="0 0 16 12"><path d="M1 3Q6 -1 16 1V10Q8 11 3 7Z" fill="#aaa8a5"/><path d="M1.5 3.5Q4 8 9 8.5L16 8" fill="none" stroke="#fff" stroke-width="1.4"/></svg></div>
<div class="a" style="left:934px;top:130px;width:40px;height:181px;background:#fff;border:1px solid #b4b2af"></div>
<div class="a" style="left:935px;top:131px;width:37px;height:19px;background:#dddbd8"></div>
<div class="a" style="left:938px;top:135px"><svg width="15" height="12" viewBox="0 0 15 12"><path d="M0.8 5Q7 12.5 14 6.5Q8 0.5 0.8 5Z" fill="#fff"/><path d="M2.5 8Q7.5 12 12.5 8.5" fill="none" stroke="#707070" stroke-width="0.9"/><path d="M0.5 5.2Q7 0.8 13.8 5.2" fill="none" stroke="#000" stroke-width="1.7"/><path d="M13.8 5Q14.6 7.5 12 9.3" fill="none" stroke="#000" stroke-width="1.4"/><circle cx="8.2" cy="5.6" r="3.6" fill="#000"/><rect x="5.6" y="4.3" width="1.4" height="1.3" fill="#8a8a8a"/><path d="M8 2V0.5M10.3 2.4L11 1M12.3 3.4L13.5 2.4" stroke="#000" stroke-width="1.2"/></svg></div>
<div class="a" style="left:957px;top:135px;width:8px;height:11px"><div class="a" style="left:1px;top:0;width:6px;height:7px;border:2px solid #a6a4a1;border-bottom:none;border-radius:3px 3px 0 0"></div><div class="a" style="left:0;top:5px;width:8px;height:6px;background:#a6a4a1"></div></div>
<div class="a" style="left:969px;top:135px;width:4px;height:11px;background:#3a2a10;border-radius:2px 0 0 2px;border-left:1px solid #c8a040"></div>
<div class="a" style="left:936px;top:323px;font-size:14px;color:#3c3c3c;letter-spacing:0.3px">Block</div>
<div class="a" style="left:944px;top:353px;width:20px;height:20px;border:1px solid #a8a6a2;border-radius:4px;background:linear-gradient(#f6f5f4,#dcdad7)"><div class="a" style="left:2px;top:4px"><svg width="15" height="12" viewBox="0 0 15 12"><path d="M0.8 5Q7 12.5 14 6.5Q8 0.5 0.8 5Z" fill="#fff"/><path d="M2.5 8Q7.5 12 12.5 8.5" fill="none" stroke="#707070" stroke-width="0.9"/><path d="M0.5 5.2Q7 0.8 13.8 5.2" fill="none" stroke="#000" stroke-width="1.7"/><path d="M13.8 5Q14.6 7.5 12 9.3" fill="none" stroke="#000" stroke-width="1.4"/><circle cx="8.2" cy="5.6" r="3.6" fill="#000"/><rect x="5.6" y="4.3" width="1.4" height="1.3" fill="#8a8a8a"/><path d="M8 2V0.5M10.3 2.4L11 1M12.3 3.4L13.5 2.4" stroke="#000" stroke-width="1.2"/></svg></div></div>
<div class="a" style="left:966px;top:353px;width:20px;height:20px;border:1px solid #a8a6a2;border-radius:4px;background:linear-gradient(#f6f5f4,#dcdad7)"><svg class="a" style="left:2px;top:4px" width="16" height="12" viewBox="0 0 16 12"><path d="M1 3Q6 -1 16 1V10Q8 11 3 7Z" fill="#aaa8a5"/><path d="M1.5 3.5Q4 8 9 8.5L16 8" fill="none" stroke="#fff" stroke-width="1.4"/></svg></div>
<div class="a" style="left:966px;top:376px;width:20px;height:19px;border:1px solid #a8a6a2;border-radius:4px;background:linear-gradient(#f6f5f4,#dcdad7)"><div class="a" style="left:3px;top:2px;width:4px;height:14px;border-left:2px solid #5a5a5a"></div><div class="a" style="left:2px;top:1px;width:3px;height:3px;background:#4caf20;border-radius:50%"></div><div class="a" style="left:2px;top:14px;width:3px;height:3px;background:#4caf20;border-radius:50%"></div></div>
<div class="a" style="left:943px;top:396px;width:31px;height:70px;background:#fff;border:1px solid #b4b2af"></div>

<!-- command line -->
<div class="a" style="left:58px;top:487px;font-size:14px;letter-spacing:0.55px">Command line</div>
<div class="a" style="left:56px;top:506px;width:916px;height:177px;background:#fff;border:1px solid #bab8b5;border-right:none"></div>
<div class="a" style="left:56px;top:691px;font-size:14px;letter-spacing:0.55px">Command:</div>
<div class="a" style="left:137px;top:688px;width:835px;height:21px;background:#fff"></div>
<div class="a" style="left:0;top:712px;width:972px;height:1px;background:#dad8d5"></div>
<div class="a" style="left:190px;top:715px;width:4px;height:1px;background:#a8a6a3"></div>

</body></html>
